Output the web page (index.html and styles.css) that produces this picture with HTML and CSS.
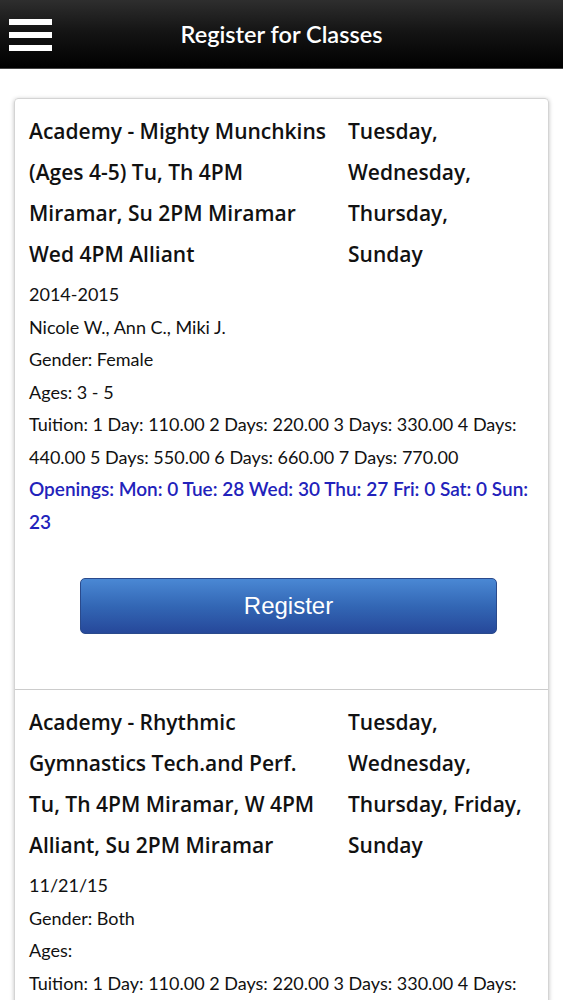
FILE: index.html
```html
<!DOCTYPE html>
<html lang="en">
<head>
  <meta charset="UTF-8" />
  <meta name="viewport" content="width=device-width, initial-scale=1.0" />
  <title>Register for Classes</title>
  <link rel="stylesheet" href="styles.css">
</head>
<body>
  <div class="header">
    <div class="menu-btn">
      <span></span>
      <span></span>
      <span></span>
    </div>
    <h1>Register for Classes</h1>
  </div>

  <div class="card">
    <div class="class-item">
      <div class="class-head">
        <div class="class-name">Academy - Mighty Munchkins (Ages 4-5) Tu, Th 4PM Miramar, Su 2PM Miramar Wed 4PM Alliant</div>
        <div class="class-days">Tuesday, Wednesday, Thursday, Sunday</div>
      </div>
      <p>2014-2015</p>
      <p>Nicole W., Ann C., Miki J.</p>
      <p>Gender: Female</p>
      <p>Ages: 3 - 5</p>
      <p>Tuition: 1 Day: 110.00 2 Days: 220.00 3 Days: 330.00 4 Days: 440.00 5 Days: 550.00 6 Days: 660.00 7 Days: 770.00</p>
      <p class="openings">Openings: Mon: 0 Tue: 28 Wed: 30 Thu: 27 Fri: 0 Sat: 0 Sun: 23</p>
      <button class="register-btn">Register</button>
    </div>

    <div class="class-item">
      <div class="class-head">
        <div class="class-name">Academy - Rhythmic Gymnastics Tech.and Perf. Tu, Th 4PM Miramar, W 4PM Alliant, Su 2PM Miramar</div>
        <div class="class-days">Tuesday, Wednesday, Thursday, Friday, Sunday</div>
      </div>
      <p>11/21/15</p>
      <p>Gender: Both</p>
      <p>Ages:</p>
      <p>Tuition: 1 Day: 110.00 2 Days: 220.00 3 Days: 330.00 4 Days: 440.00 5 Days: 550.00 6 Days: 660.00 7 Days: 770.00</p>
      <p class="openings">Openings: Mon: 0 Tue: 20 Wed: 20 Thu: 20 Fri: 0 Sat: 0 Sun: 20</p>
      <button class="register-btn">Register</button>
    </div>
  </div>
</body>
</html>
```

FILE: styles.css
```css
body {
  margin: 0;
  font-family: Lato, "Open Sans", sans-serif;
  background-color: #fff;
  color: #111;
}
.header {
  height: 69px;
  display: flex;
  align-items: center;
  justify-content: center;
  position: relative;
  background: linear-gradient(#2e2e2e, #151515 45%, #000);
  border-bottom: 1px solid #444;
  box-sizing: border-box;
}
.header h1 {
  margin: 0;
  color: #fff;
  font-size: 23.5px;
  font-weight: 600;
}
.menu-btn {
  position: absolute;
  left: 9px;
  top: 19px;
  display: flex;
  flex-direction: column;
  gap: 7px;
}
.menu-btn span {
  display: block;
  width: 43px;
  height: 6px;
  background-color: #fff;
}
.card {
  margin: 29px 14px 0;
  border: 1px solid #d4d4d4;
  border-radius: 4px;
  box-shadow: 0 1px 4px rgba(0, 0, 0, 0.25);
}
.class-item {
  padding: 12px 14px 0;
  border-bottom: 1px solid #ccc;
}
.class-head {
  display: grid;
  grid-template-columns: 300px 1fr;
  column-gap: 19px;
  margin-bottom: 3px;
  font-family: "Open Sans", Lato, sans-serif;
  font-size: 21px;
  font-weight: 600;
  line-height: 41px;
}
.class-days {
  padding-right: 10px;
}
.class-item p {
  margin: 0;
  font-size: 18px;
  line-height: 32.5px;
}
.class-item .openings {
  color: #2222bb;
  font-size: 19px;
  font-weight: 600;
}
.register-btn {
  display: block;
  width: 417px;
  height: 56px;
  margin: 40px 0 55px 51px;
  border: 1px solid #2a4a8c;
  border-radius: 5px;
  background: linear-gradient(#4a88d4, #3367b5 50%, #26489a);
  color: #fff;
  font-family: "Liberation Sans", Arial, sans-serif;
  font-size: 24px;
}
```
